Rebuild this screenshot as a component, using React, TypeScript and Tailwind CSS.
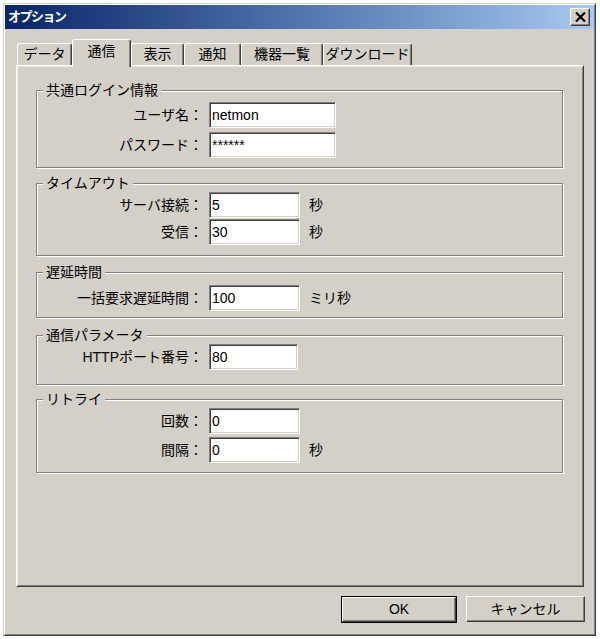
import React from 'react';

type RowProps = { label: string; unit?: string; children: React.ReactNode };

const Field = ({ value, width }: { value: string; width: string }) => (
  <input
    readOnly
    value={value}
    className={`${width} h-[26px] bg-white pl-[2px] text-[14px] text-black outline-none border border-t-[#808080] border-l-[#808080] border-r-white border-b-white shadow-[inset_1px_1px_0_#404040,inset_-1px_-1px_0_#d4d0c8]`}
  />
);

const Row = ({ label, unit, children }: RowProps) => (
  <div className="flex items-center">
    <span className="w-[166px] text-right whitespace-nowrap">{label}</span>
    <div className="ml-[6px] flex">{children}</div>
    {unit && <span className="ml-[9px]">{unit}</span>}
  </div>
);

const Group = ({
  title,
  className,
  inner,
  children,
}: {
  title: string;
  className: string;
  inner: string;
  children: React.ReactNode;
}) => (
  <fieldset className={`border border-[#808080] shadow-[inset_1px_1px_0_#fff,1px_1px_0_#fff] ${className}`}>
    <legend className="ml-[6px] px-[3px] leading-[18px] bg-[#d4d0c8]">{title}</legend>
    <div className={`flex flex-col ${inner}`}>{children}</div>
  </fieldset>
);

const tabs = [
  { label: 'データ', w: 'w-[55px]' },
  { label: '通信', w: 'w-[59px]', active: true },
  { label: '表示', w: 'w-[53px]' },
  { label: '通知', w: 'w-[57px]' },
  { label: '機器一覧', w: 'w-[82px]' },
  { label: 'ダウンロード', w: 'w-[89px]' },
];

export default function App() {
  return (
    <div className="w-[600px] h-[639px] bg-white pt-[3px] pl-[3px] text-[14px] text-black font-['Liberation_Sans','Noto_Sans_CJK_JP',sans-serif]">
      {/* window */}
      <div className="w-[593px] h-[633px] flex flex-col bg-[#d4d0c8] p-[1px] border border-t-[#d4d0c8] border-l-[#d4d0c8] border-r-[#404040] border-b-[#404040] shadow-[inset_1px_1px_0_#fff,inset_-1px_-1px_0_#808080]">

        {/* title bar */}
        <div className="h-[24px] flex items-center justify-between pl-[3px] pr-[4px] bg-linear-to-r from-[#0a246a] to-[#a6caf0]">
          <span className="text-[13px] font-bold text-white tracking-[-1.5px]">オプション</span>
          <button className="w-[20px] h-[18px] flex items-center justify-center bg-[#d4d0c8] border border-t-white border-l-white border-r-[#404040] border-b-[#404040] shadow-[inset_-1px_-1px_0_#808080]">
            <svg width="11" height="10" viewBox="0 0 11 10">
              <path d="M1 0.5 L10 9.5 M10 0.5 L1 9.5" stroke="#000" strokeWidth="2.2" />
            </svg>
          </button>
        </div>

        {/* tabs */}
        <div className="mt-[10px] ml-[12px] h-[26px] flex items-end relative z-10">
          {tabs.map((t) => (
            <div
              key={t.label}
              className={
                t.active
                  ? `${t.w} h-[28px] -mb-[2px] pb-[4px] flex items-center justify-center bg-[#d4d0c8] rounded-t-[3px] border-t border-l border-t-white border-l-white border-r border-r-[#404040] shadow-[inset_-1px_0_0_#808080]`
                  : `${t.w} h-[22px] flex items-center justify-center rounded-t-[3px] border-t border-l border-t-white border-l-white border-r border-r-[#404040] shadow-[inset_-1px_0_0_#808080]`
              }
            >
              {t.label}
            </div>
          ))}
        </div>

        {/* panel */}
        <div className="ml-[11px] w-[568px] h-[522px] pt-[15px] pl-[19px] pr-[20px] flex flex-col border border-t-white border-l-white border-r-[#404040] border-b-[#404040] shadow-[inset_1px_1px_0_#e8e6e0,inset_-1px_-1px_0_#808080]">
          <Group title="共通ログイン情報" className="pb-[9px]" inner="pt-[3px] gap-[4px]">
            <Row label="ユーザ名：">
              <Field value="netmon" width="w-[127px]" />
            </Row>
            <Row label="パスワード：">
              <Field value="******" width="w-[127px]" />
            </Row>
          </Group>

          <Group title="タイムアウト" className="mt-[6px] pb-[10px]" inner="pt-0 gap-[1px]">
            <Row label="サーバ接続：" unit="秒">
              <Field value="5" width="w-[91px]" />
            </Row>
            <Row label="受信：" unit="秒">
              <Field value="30" width="w-[91px]" />
            </Row>
          </Group>

          <Group title="遅延時間" className="mt-[7px] pb-[6px]" inner="pt-[4px]">
            <Row label="一括要求遅延時間：" unit="ミリ秒">
              <Field value="100" width="w-[91px]" />
            </Row>
          </Group>

          <Group title="通信パラメータ" className="mt-[8px] pb-[14px]" inner="pt-0">
            <Row label="HTTPポート番号：">
              <Field value="80" width="w-[89px]" />
            </Row>
          </Group>

          <Group title="リトライ" className="mt-[5px] pb-[9px]" inner="pt-0 gap-[3px]">
            <Row label="回数：">
              <Field value="0" width="w-[91px]" />
            </Row>
            <Row label="間隔：" unit="秒">
              <Field value="0" width="w-[91px]" />
            </Row>
          </Group>
        </div>

        {/* buttons */}
        <div className="mt-[9px] pr-[9px] flex justify-end gap-[9px]">
          <button className="w-[116px] h-[27px] border border-black">
            <span className="w-full h-full flex items-center justify-center border border-t-white border-l-white border-r-[#404040] border-b-[#404040] shadow-[inset_-1px_-1px_0_#808080]">
              OK
            </span>
          </button>
          <button className="w-[119px] h-[26px] flex items-center justify-center border border-t-white border-l-white border-r-[#404040] border-b-[#404040] shadow-[inset_-1px_-1px_0_#808080]">
            キャンセル
          </button>
        </div>
      </div>
    </div>
  );
}
